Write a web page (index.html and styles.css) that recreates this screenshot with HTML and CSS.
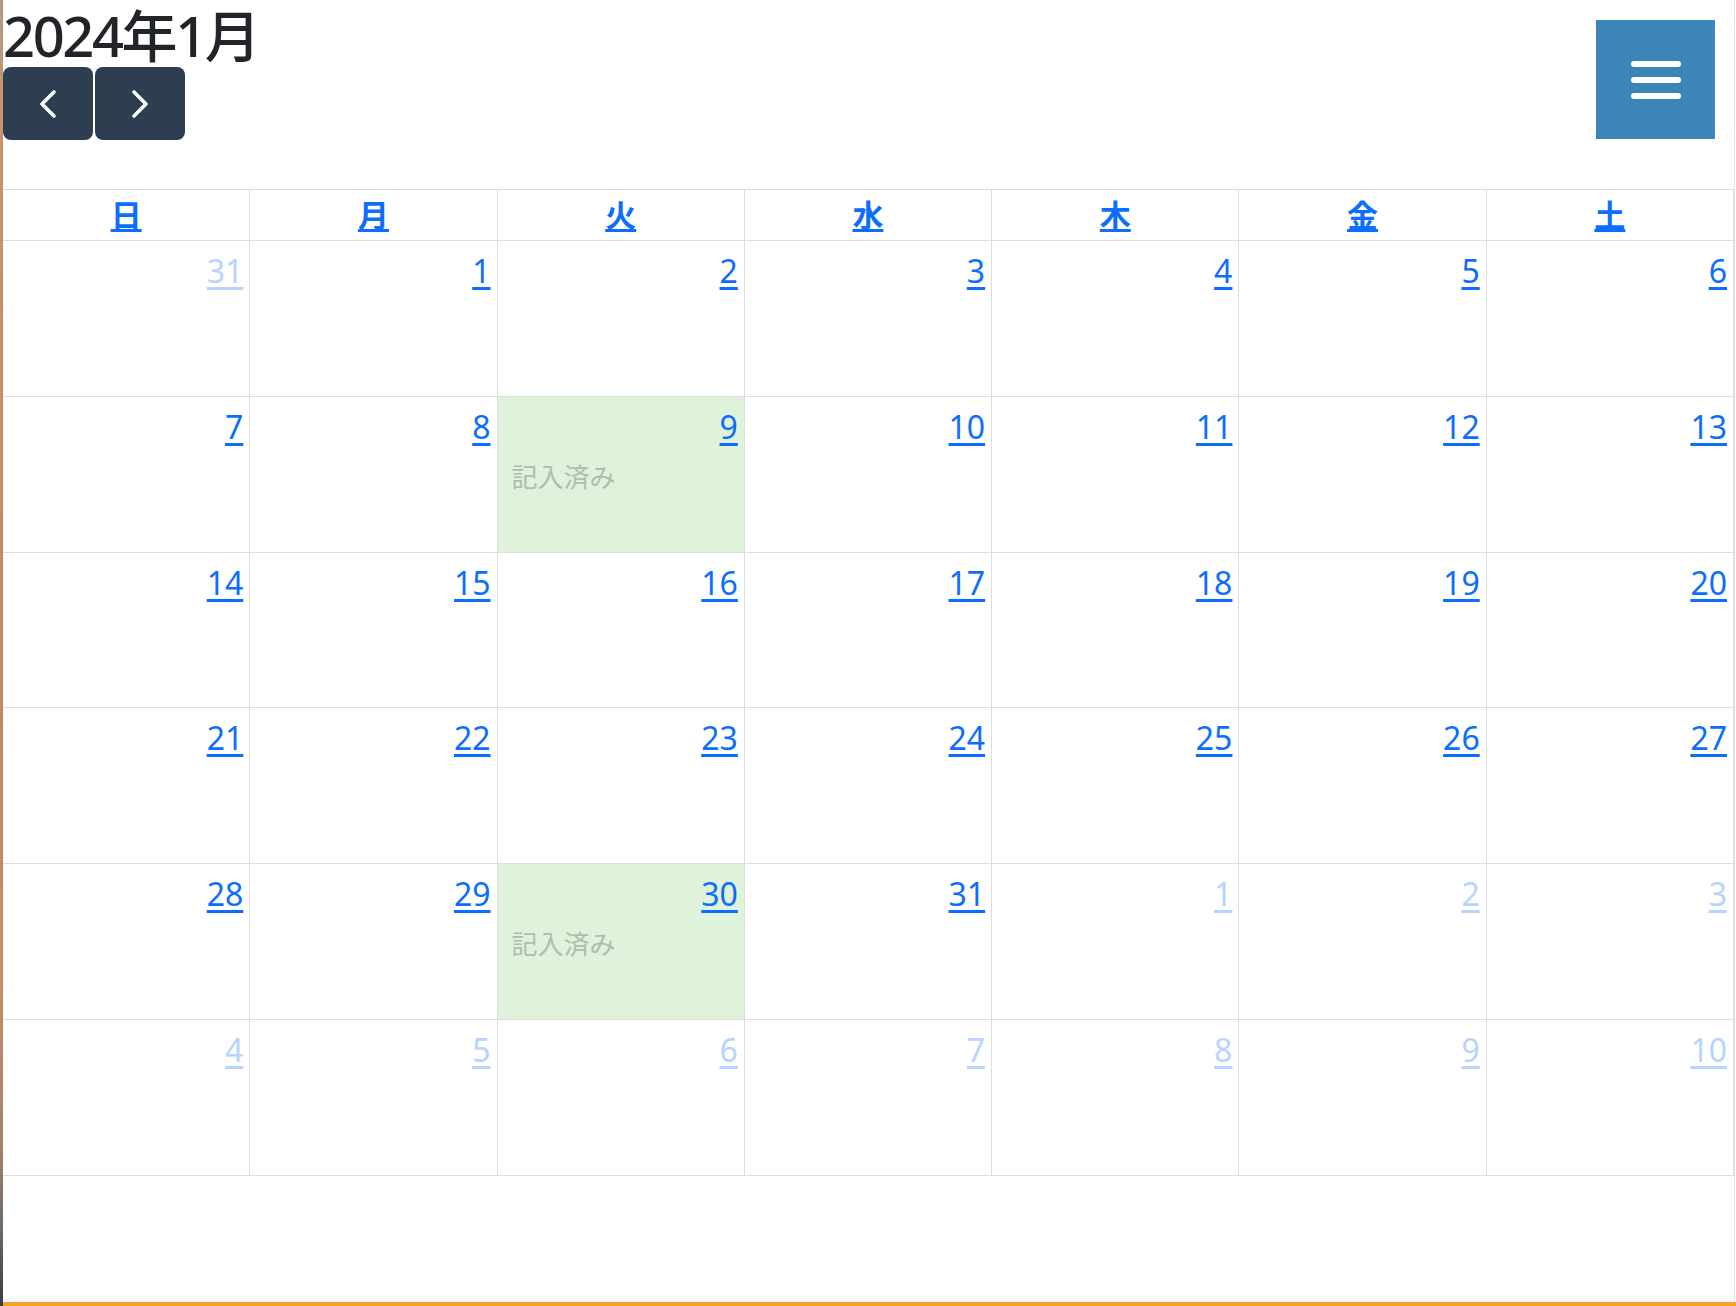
FILE: index.html
```html
<!DOCTYPE html>
<html lang="ja">
<head>
<meta charset="utf-8">
<title>カレンダー</title>
<link rel="stylesheet" href="styles.css">
</head>
<body>
<div class="page">
  <div class="toolbar">
    <div class="toolbar-left">
      <h2 class="title">2024年1月</h2>
      <div class="btn-group">
        <button class="nav-btn" aria-label="prev">
          <svg width="18" height="30" viewBox="0 0 18 30"><polyline points="15,3 3,15 15,27" fill="none" stroke="#fff" stroke-width="3.6" stroke-linecap="round" stroke-linejoin="round"/></svg>
        </button>
        <button class="nav-btn" aria-label="next">
          <svg width="18" height="30" viewBox="0 0 18 30"><polyline points="3,3 15,15 3,27" fill="none" stroke="#fff" stroke-width="3.6" stroke-linecap="round" stroke-linejoin="round"/></svg>
        </button>
      </div>
    </div>
    <button class="menu-btn" aria-label="menu">
      <span class="bar-line"></span>
      <span class="bar-line"></span>
      <span class="bar-line"></span>
    </button>
  </div>

  <div class="calendar">
    <div class="dow"><a href="#">日</a></div>
    <div class="dow"><a href="#">月</a></div>
    <div class="dow"><a href="#">火</a></div>
    <div class="dow"><a href="#">水</a></div>
    <div class="dow"><a href="#">木</a></div>
    <div class="dow"><a href="#">金</a></div>
    <div class="dow"><a href="#">土</a></div>

    <div class="day other"><a href="#">31</a></div>
    <div class="day"><a href="#">1</a></div>
    <div class="day"><a href="#">2</a></div>
    <div class="day"><a href="#">3</a></div>
    <div class="day"><a href="#">4</a></div>
    <div class="day"><a href="#">5</a></div>
    <div class="day"><a href="#">6</a></div>

    <div class="day"><a href="#">7</a></div>
    <div class="day"><a href="#">8</a></div>
    <div class="day done"><a href="#">9</a><div class="memo">記入済み</div></div>
    <div class="day"><a href="#">10</a></div>
    <div class="day"><a href="#">11</a></div>
    <div class="day"><a href="#">12</a></div>
    <div class="day"><a href="#">13</a></div>

    <div class="day"><a href="#">14</a></div>
    <div class="day"><a href="#">15</a></div>
    <div class="day"><a href="#">16</a></div>
    <div class="day"><a href="#">17</a></div>
    <div class="day"><a href="#">18</a></div>
    <div class="day"><a href="#">19</a></div>
    <div class="day"><a href="#">20</a></div>

    <div class="day"><a href="#">21</a></div>
    <div class="day"><a href="#">22</a></div>
    <div class="day"><a href="#">23</a></div>
    <div class="day"><a href="#">24</a></div>
    <div class="day"><a href="#">25</a></div>
    <div class="day"><a href="#">26</a></div>
    <div class="day"><a href="#">27</a></div>

    <div class="day"><a href="#">28</a></div>
    <div class="day"><a href="#">29</a></div>
    <div class="day done"><a href="#">30</a><div class="memo">記入済み</div></div>
    <div class="day"><a href="#">31</a></div>
    <div class="day other"><a href="#">1</a></div>
    <div class="day other"><a href="#">2</a></div>
    <div class="day other"><a href="#">3</a></div>

    <div class="day other"><a href="#">4</a></div>
    <div class="day other"><a href="#">5</a></div>
    <div class="day other"><a href="#">6</a></div>
    <div class="day other"><a href="#">7</a></div>
    <div class="day other"><a href="#">8</a></div>
    <div class="day other"><a href="#">9</a></div>
    <div class="day other"><a href="#">10</a></div>
  </div>
</div>
<div class="bottom-bar"></div>
</body>
</html>
```

FILE: styles.css
```css
html, body {
  margin: 0;
  padding: 0;
}

body {
  height: 1306px;
  padding-left: 3px;
  box-sizing: border-box;
  display: flex;
  flex-direction: column;
  overflow: hidden;
  font-family: "Noto Sans", "Noto Sans CJK JP", sans-serif;
  color: #212529;
  background-color: #fff;
  background-image: linear-gradient(to bottom, #b49a80 0%, #c79470 8%, #c98e66 30%, #c6875f 55%, #c88e68 75%, #a98068 88%, #6b6a6c 94%, #383c44 100%);
  background-size: 3px 100%;
  background-repeat: no-repeat;
}

.page {
  flex: 1;
  background: #fff;
  border-right: 1px solid #e4e4e4;
  margin-right: 1px;
}

.toolbar {
  display: flex;
  justify-content: space-between;
  align-items: flex-start;
  margin-bottom: 49px;
}

.title {
  margin: 0;
  padding-top: 3px;
  font-size: 56px;
  line-height: 64px;
  font-weight: 500;
  color: #212529;
  letter-spacing: -2.4px;
}

.btn-group {
  display: flex;
  gap: 2px;
}

.nav-btn {
  width: 90px;
  height: 73px;
  border: none;
  border-radius: 8px;
  background: #2c3e50;
  display: flex;
  align-items: center;
  justify-content: center;
  padding: 0;
  cursor: pointer;
}

.menu-btn {
  width: 119px;
  height: 119px;
  margin-top: 20px;
  margin-right: 19px;
  border: none;
  padding: 0;
  background: #3d84b8;
  display: flex;
  flex-direction: column;
  align-items: center;
  justify-content: center;
  gap: 10px;
  cursor: pointer;
}

.bar-line {
  display: block;
  width: 50px;
  height: 6px;
  border-radius: 3px;
  background: #fff;
}

.calendar {
  display: grid;
  grid-template-columns: repeat(7, 1fr);
  grid-template-rows: 51px repeat(6, 155.8px);
  border-top: 1px solid #dddddd;
}

.dow {
  box-sizing: border-box;
  border-right: 1px solid #dddddd;
  border-bottom: 1px solid #dddddd;
  text-align: center;
  line-height: 48px;
  padding-top: 1px;
}

.dow a {
  color: #0d6efd;
  font-size: 31px;
  font-weight: 700;
  text-decoration: underline;
  text-decoration-thickness: 3px;
  text-underline-offset: 2px;
}

.day {
  box-sizing: border-box;
  border-right: 1px solid #dddddd;
  border-bottom: 1px solid #dddddd;
  padding: 8px 6px 0 14px;
  display: flex;
  flex-direction: column;
}

.day a {
  align-self: flex-end;
  color: #0d6efd;
  font-size: 32px;
  line-height: 43px;
  text-decoration: underline;
  text-decoration-thickness: 3px;
  text-underline-offset: 4px;
}

.day.other a {
  color: #b6d4fe;
}

.day.done {
  background: #dff3da;
}

.memo {
  margin-top: 12px;
  font-size: 26px;
  line-height: 34px;
  color: #b3bab1;
  font-weight: 400;
}

.bottom-bar {
  height: 4px;
  background: #f6a12e;
}
```
